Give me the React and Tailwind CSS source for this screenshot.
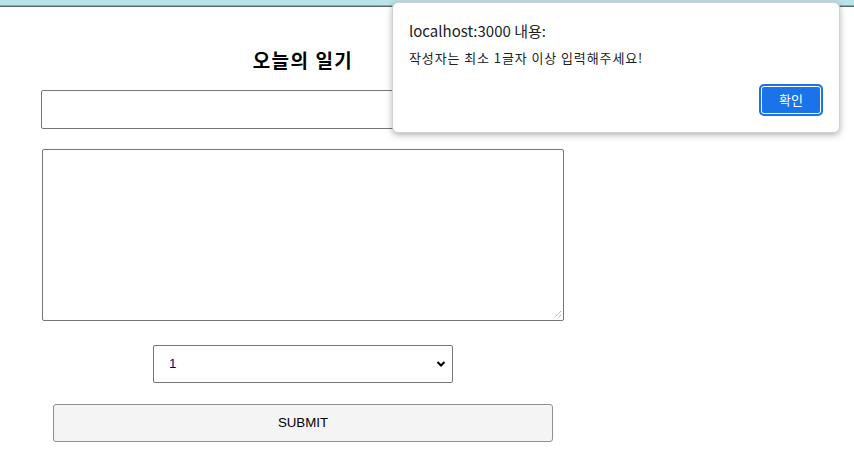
const font = { fontFamily: '"Noto Sans CJK KR", "Noto Sans", sans-serif' };

function AlertDialog() {
  return (
    <div className="absolute left-[392px] top-[2px] w-[448px] h-[131px] rounded-[6px] bg-white border border-[#d0d0d0] shadow-[0_2px_6px_rgba(0,0,0,0.3)] px-[16px] pt-[17px]">
      <div className="text-[15px] leading-[22px] text-[#202124]">localhost:3000 내용:</div>
      <div className="mt-[7px] text-[13px] tracking-[0.9px] leading-[18px] text-[#202124]">작성자는 최소 1글자 이상 입력해주세요!</div>
      <div className="mt-[17px] flex justify-end">
        <button className="w-[64px] h-[32px] rounded-[5px] bg-[#1a73e8] text-white text-[13px] border-2 border-[#1a73e8] ring-1 ring-inset ring-white">
          확인
        </button>
      </div>
    </div>
  );
}

function DiaryEditor() {
  return (
    <div className="w-[606px] flex flex-col items-center pt-[39px]">
      <h3 className="text-[19px] tracking-[1.5px] leading-[27px] font-bold text-black">오늘의 일기</h3>
      <div className="mt-[17px] w-[524px] h-[39px] border border-[#767676] rounded-[2px] bg-white" />
      <div className="relative mt-[20px] w-[522px] h-[172px] border border-[#767676] rounded-[2px] bg-white">
        <svg className="absolute right-[1px] bottom-[1px]" width="9" height="9" viewBox="0 0 9 9">
          <path d="M8 1 L1 8 M8 5 L5 8" stroke="#8a8a8a" strokeWidth="1" strokeDasharray="1 1" fill="none" />
        </svg>
      </div>
      <div className="mt-[24px] w-[300px] h-[38px] border border-[#767676] rounded-[2px] bg-white flex items-center justify-between pl-[15px] pr-[6px]">
        <span className="text-[13.3px] text-[#000080]" style={{ fontFamily: '"Liberation Sans", Arial, sans-serif' }}>1</span>
        <svg width="10" height="8" viewBox="0 0 10 8">
          <path d="M1.5 2 L5 5.5 L8.5 2" stroke="#000" strokeWidth="2" fill="none" />
        </svg>
      </div>
      <button
        className="mt-[21px] w-[500px] h-[38px] border border-[#8f8f8f] rounded-[3px] bg-[#f4f4f4] text-[13.3px] text-black"
        style={{ fontFamily: '"Liberation Sans", Arial, sans-serif' }}
      >
        SUBMIT
      </button>
    </div>
  );
}

export default function App() {
  return (
    <div className="relative w-[854px] h-[452px] bg-white overflow-hidden" style={font}>
      <div className="h-[5px] bg-[#b8e3e9]" />
      <div className="h-px bg-[#93a9ab]" />
      <div className="h-px bg-[#5d6566]" />
      <DiaryEditor />
      <AlertDialog />
    </div>
  );
}
